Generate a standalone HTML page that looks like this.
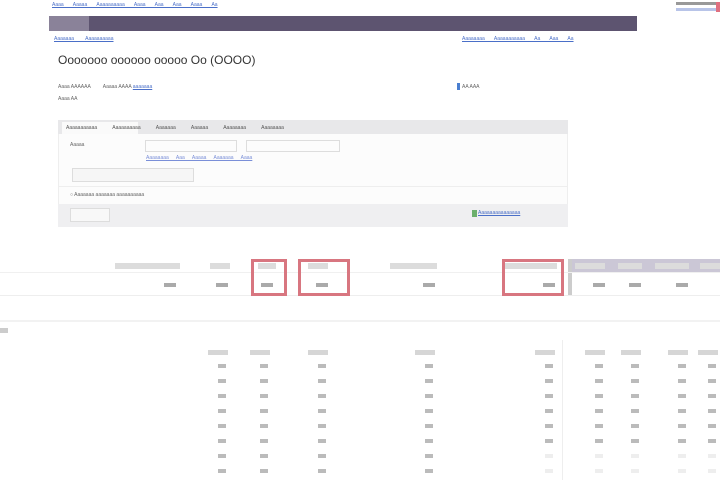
<!DOCTYPE html>
<html><head><meta charset="utf-8"><style>
body{margin:0;width:720px;height:480px;background:#fff;font-family:"Liberation Sans",sans-serif;position:relative;overflow:hidden}
.a{position:absolute}
.l{color:#4a6fc8;font-size:5px;text-decoration:underline}
.t{font-size:5px;color:#666}
</style></head><body>
<div class="a l" style="left:52px;top:2px;word-spacing:8px">Aaaa Aaaaa Aaaaaaaaaa Aaaa Aaa Aaa Aaaa Aa</div>
<div class="a" style="left:676px;top:2px;width:44px;height:3px;background:#999"></div>
<div class="a" style="left:676px;top:8px;width:44px;height:3px;background:#b8c4e8"></div>
<div class="a" style="left:716px;top:2px;width:4px;height:10px;background:#e07080"></div>
<div class="a" style="left:49px;top:16px;width:588px;height:15px;background:#5d5470"></div>
<div class="a" style="left:49px;top:16px;width:40px;height:15px;background:#8a8299"></div>
<div class="a l" style="left:54px;top:36px;word-spacing:10px">Aaaaaaa Aaaaaaaaaa</div>
<div class="a l" style="left:462px;top:36px;word-spacing:8px">Aaaaaaaa Aaaaaaaaaaa Aa Aaa Aa</div>
<div class="a" style="left:58px;top:53px;font-size:12px;color:#333">Ооооооо оооооо ооооо Оо (ОООО)</div>
<div class="a t" style="left:58px;top:84px">Aaaa AAAAAA &nbsp;&nbsp;&nbsp;&nbsp;&nbsp;&nbsp;&nbsp; Aaaaa AAAA <span class="l">aaaaaaa</span></div>
<div class="a t" style="left:58px;top:96px">Aaaa AA</div>
<div class="a" style="left:457px;top:83px;width:3px;height:7px;background:#4a7fd0"></div>
<div class="a t" style="left:462px;top:84px">AA AAA</div>
<div class="a" style="left:58px;top:120px;width:510px;height:107px;background:#fcfcfc;border:1px solid #eee;box-sizing:border-box"></div>
<div class="a" style="left:58px;top:120px;width:510px;height:14px;background:#e8e8ea"></div>
<div class="a" style="left:62px;top:122px;width:76px;height:12px;background:#fafafa"></div>
<div class="a t" style="left:66px;top:125px;word-spacing:14px;color:#555">Aaaaaaaaaaa Aaaaaaaaaa Aaaaaaa Aaaaaa Aaaaaaaa Aaaaaaaa</div>
<div class="a t" style="left:70px;top:142px">Aaaaa</div>
<div class="a" style="left:145px;top:140px;width:90px;height:10px;border:1px solid #ddd"></div>
<div class="a" style="left:246px;top:140px;width:92px;height:10px;border:1px solid #ddd"></div>
<div class="a l" style="left:146px;top:155px;word-spacing:6px;color:#7a8fd8">Aaaaaaaa Aaa Aaaaa Aaaaaaa Aaaa</div>
<div class="a" style="left:72px;top:168px;width:120px;height:12px;border:1px solid #ddd;background:#f6f6f6"></div>
<div class="a" style="left:58px;top:186px;width:510px;height:1px;background:#eee"></div>
<div class="a t" style="left:70px;top:192px">○ Aaaaaaa aaaaaaa aaaaaaaaaa</div>
<div class="a" style="left:58px;top:204px;width:510px;height:23px;background:#efeff1"></div>
<div class="a" style="left:70px;top:208px;width:38px;height:12px;border:1px solid #ddd;background:#f8f8f8"></div>
<div class="a" style="left:472px;top:210px;width:5px;height:7px;background:#6cb06c"></div>
<div class="a l" style="left:478px;top:210px">Aaaaaaaaaaaaaaa</div>
<div class="a" style="left:568px;top:259px;width:152px;height:13px;background:#cbc7d6"></div>
<div class="a" style="left:568px;top:259px;width:4px;height:36px;background:#ccc"></div>
<div class="a" style="left:0;top:295px;width:720px;height:1px;background:#eee"></div>
<div class="a" style="left:0;top:272px;width:720px;height:1px;background:#f0f0f0"></div>
<div class="a" style="left:251px;top:259px;width:30px;height:31px;border:3px solid #d87680"></div>
<div class="a" style="left:298px;top:259px;width:46px;height:31px;border:3px solid #d87680"></div>
<div class="a" style="left:502px;top:259px;width:56px;height:31px;border:3px solid #d87680"></div>
<div class="a" style="left:0;top:320px;width:720px;height:2px;background:#f2f2f2"></div>
<div class="a" style="left:0;top:328px;width:8px;height:5px;background:#ccc"></div>
<div class="a" style="left:562px;top:340px;width:1px;height:140px;background:#eee"></div>
<div id="rows"></div>
<script>
var h='';
var lab=[[115,65],[210,20],[258,18],[308,20],[390,47],[505,52],[575,30],[618,24],[655,34],[700,20]];
lab.forEach(function(p){h+='<div class="a" style="left:'+p[0]+'px;top:263px;width:'+p[1]+'px;height:6px;background:#dcdcdc"></div>';});
[178,230,275,330,437,557,607,643,690].forEach(function(x){h+='<div class="a" style="left:'+(x-14)+'px;top:283px;width:12px;height:4px;background:#aaa"></div>';});
[230,272,330,437,557,607,643,690,720].forEach(function(x,i){h+='<div class="a" style="left:'+(x-22)+'px;top:350px;width:20px;height:5px;background:#d6d6d6"></div>';
for(var r=0;r<8;r++){var c=(r>=6&&i>3)?'#eee':'#bbb';h+='<div class="a" style="left:'+(x-12)+'px;top:'+(364+r*15)+'px;width:8px;height:4px;background:'+c+'"></div>';}});
document.getElementById('rows').innerHTML=h;
</script>
</body></html>
